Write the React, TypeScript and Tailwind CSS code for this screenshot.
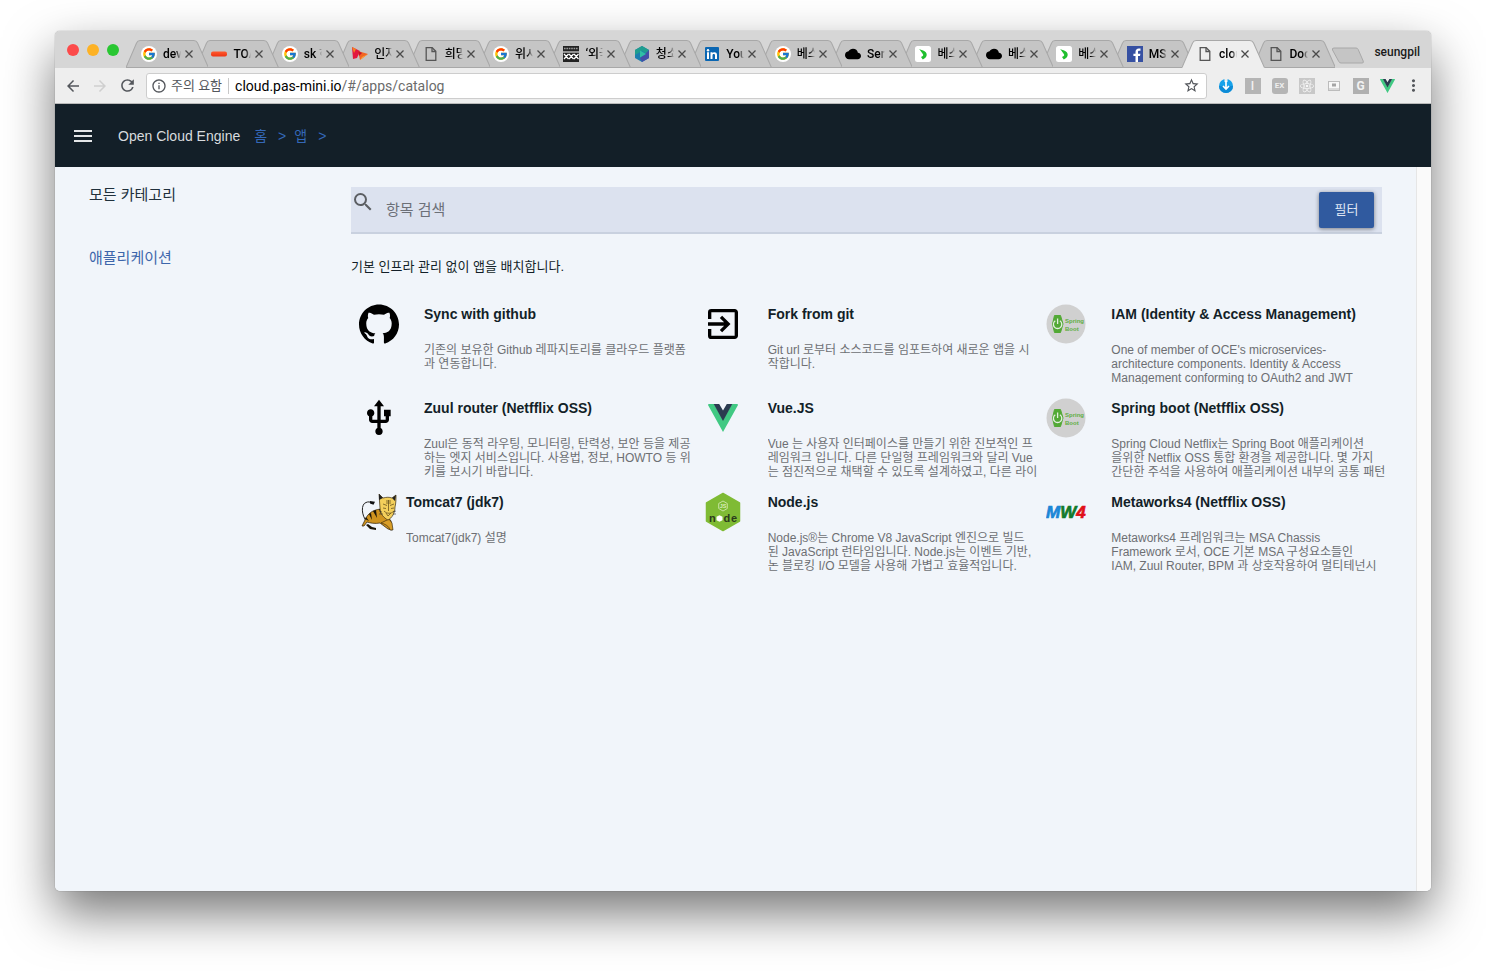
import React from "react";
import {
  MdArrowBack,
  MdArrowForward,
  MdCloud,
  MdExitToApp,
  MdInfoOutline,
  MdMenu,
  MdMoreVert,
  MdRefresh,
  MdSearch,
  MdStarBorder,
  MdUsb,
} from "react-icons/md";
import { FcGoogle } from "react-icons/fc";
import { SiGithub, SiReact } from "react-icons/si";

/* ---------- favicons ---------- */

const GoogleIcon = () => (
  <span className="flex size-4 items-center justify-center rounded-full bg-white">
    <FcGoogle className="size-[14px]" />
  </span>
);

const ToastIcon = () => (
  <svg viewBox="0 0 16 16" className="size-4">
    <defs>
      <linearGradient id="toast" x1="0" y1="0" x2="0" y2="1">
        <stop offset="0" stopColor="#ff5a2e" />
        <stop offset="1" stopColor="#ee3413" />
      </linearGradient>
    </defs>
    <rect x="0" y="5.500" width="16" height="5" rx="2" fill="url(#toast)" />
  </svg>
);

const WingsIcon = () => (
  <svg viewBox="0 0 16 16" className="size-4">
    <path d="M0 1 L8 5 L5 12 L1 13 Z" fill="#e3173e" />
    <path d="M0 1 L4 3 L2 7 Z" fill="#f58220" />
    <path d="M6 5 L16 8 L8 14 Z" fill="#f26522" />
    <path d="M6 5 L10 7 L7 10 Z" fill="#c8102e" />
    <path d="M10 11 L16 8 L8 14 Z" fill="#f9a13a" />
  </svg>
);

const PageIcon = () => (
  <svg viewBox="0 0 16 16" className="size-4" fill="none" stroke="#555" strokeWidth="1.3">
    <path d="M3.2 1.7h6l3.6 3.6v9H3.2z" />
    <path d="M9 1.7v3.8h3.8" />
  </svg>
);

const CrowdIcon = () => (
  <svg viewBox="0 0 16 16" className="size-4">
    <rect width="16" height="16" fill="#222" />
    <path d="M1 2.500h14" stroke="#999" strokeWidth="1.500" strokeDasharray="1.600 .8" />
    <path
      d="M0 6h16M1 8l4.500 5m0-5L1 13M6 8l4.500 5m0-5L6 13M11 8l4.500 5m0-5L11 13"
      stroke="#fff"
      strokeWidth="1.200"
    />
  </svg>
);

const HexPlayIcon = () => (
  <svg viewBox="0 0 16 16" className="size-4">
    <path d="M8 0l7 4v8l-7 4-7-4V4z" fill="#1b7fae" />
    <path d="M8 0l7 4-2 4-5-3-7 4V4z" fill="#1f9d8f" />
    <path d="M8 16l7-4V4l-4 4-5 4z" fill="#4350a8" />
    <path d="M6 4.500l6 3.500-6 3.500z" fill="#2fc0a4" />
  </svg>
);

const LinkedInIcon = () => (
  <svg viewBox="0 0 16 16" className="size-4">
    <rect x="1" y="1" width="14" height="14" rx="1" fill="#0a66b2" />
    <path
      d="M3 6.300h2V13H3zM6.500 6.300h2v.9c.9-1.500 4.500-1.500 4.500 1.600V13h-2V9.400c0-1.900-2.500-1.700-2.500 0V13h-2z"
      fill="#fff"
    />
    <circle cx="4" cy="4.200" r="1.200" fill="#fff" />
  </svg>
);

const CloudIcon = () => <MdCloud className="size-4 text-black" />;

const GreenHookIcon = () => (
  <svg viewBox="0 0 16 16" className="size-4">
    <rect width="16" height="16" rx="2.500" fill="#fff" />
    <path
      d="M4.200 3c2 1.200 4.700 1.300 6.600 3.300 2 2.500.6 5.700-3 7.200l-1.800-2.500c2.300-.9 2.800-1.800 1.600-3.300L4.200 3z"
      fill="#1fbf2e"
    />
  </svg>
);

const FacebookIcon = () => (
  <svg viewBox="0 0 16 16" className="size-4">
    <rect width="16" height="16" fill="#3650a2" />
    <path
      d="M8.500 16V10H6.400V7.700h2.100V6c0-2.200 1.300-3.400 3.300-3.400h1.700v2.200h-1.200c-1 0-1.300.5-1.300 1.300v1.600h2.400l-.4 2.300h-2V16z"
      fill="#fff"
    />
  </svg>
);

const VueLogo = ({ className }: { className: string }) => (
  <svg viewBox="0 0 30 28" className={className}>
    <path d="M0 1Q0 0 1 0h5l9 15.500L24 0h5q1 0 1 1L15 28z" fill="#41c983" />
    <path d="M5.700 0h5.500L15 6.600 18.800 0h5.500L15 17z" fill="#2b3b50" />
  </svg>
);

/* ---------- browser chrome ---------- */

type Tab = { title: string; icon: () => React.ReactElement; active?: boolean };

const tabs: Tab[] = [
  { title: "dev", icon: GoogleIcon },
  { title: "TOA", icon: ToastIcon },
  { title: "sk 하", icon: GoogleIcon },
  { title: "인자", icon: WingsIcon },
  { title: "희망", icon: PageIcon },
  { title: "위시", icon: GoogleIcon },
  { title: "‘외국", icon: CrowdIcon },
  { title: "청소", icon: HexPlayIcon },
  { title: "You", icon: LinkedInIcon },
  { title: "베스", icon: GoogleIcon },
  { title: "Ser", icon: CloudIcon },
  { title: "베스", icon: GreenHookIcon },
  { title: "베스", icon: CloudIcon },
  { title: "베스", icon: GreenHookIcon },
  { title: "MS", icon: FacebookIcon },
  { title: "clou", icon: PageIcon, active: true },
  { title: "Doc", icon: PageIcon },
];

function BrowserTab({ tab, order }: { tab: Tab; order: number }) {
  const Icon = tab.icon;
  return (
    <div
      role="tab"
      aria-selected={!!tab.active}
      className="relative flex h-7 min-w-0 flex-1 items-center pl-[9px]"
      style={{ zIndex: order }}
    >
      <svg
        viewBox="0 0 82 28"
        preserveAspectRatio="none"
        className="absolute inset-y-0 -left-1.5 -z-10 h-7 w-[calc(100%+12px)]"
      >
        <path
          d="M0 27.500L10.500 3Q11.500.5 14 .5H67.500Q70 .5 71.200 3L82 27.500V28H0z"
          fill={tab.active ? "#eeeeee" : "#c5c5c5"}
        />
        <path
          d={`M0 27.500L10.500 3Q11.500.5 14 .5H67.500Q70 .5 71.200 3L82 27.500${tab.active ? "" : "H0"}`}
          fill="none"
          stroke="#a8a8a8"
        />
      </svg>
      <Icon />
      <span className="ml-1.5 w-[18px] overflow-hidden text-xs font-medium whitespace-nowrap text-black [mask-image:linear-gradient(to_right,black_70%,transparent)]">
        {tab.title}
      </span>
      <button type="button" aria-label="닫기" className="ml-0.5 flex size-3 shrink-0 items-center justify-center">
        <svg viewBox="0 0 8 8" className="size-2" stroke="#4a4a4a" strokeWidth="1.300">
          <path d="M.5.5l7 7M7.500.5l-7 7" />
        </svg>
      </button>
    </div>
  );
}

function TabStrip() {
  return (
    <div className="flex h-[37px] items-end bg-[#d6d6d6]">
      <div className="flex w-[77px] shrink-0 items-center gap-2 self-center pl-3">
        <span className="size-3 rounded-full bg-[#fc4a4a]" />
        <span className="size-3 rounded-full bg-[#fdb225]" />
        <span className="size-3 rounded-full bg-[#29c732]" />
      </div>
      <div role="tablist" className="isolate flex min-w-0 flex-1">
        {tabs.map((tab, i) => (
          <BrowserTab key={i} tab={tab} order={tab.active ? 40 : 30 - i} />
        ))}
      </div>
      <button type="button" aria-label="새 탭" className="mb-1 ml-0.5 shrink-0">
        <svg viewBox="0 0 34 17" className="h-[17px] w-[34px]">
          <path
            d="M3 1h22q1.500 0 2.200 1.500l5 11.500q.7 2-1 2H10q-1.500 0-2.200-1.500L1.500 3Q.8 1 3 1z"
            fill="#c5c5c5"
            stroke="#a8a8a8"
          />
        </svg>
      </button>
      <span className="w-[66px] shrink-0 self-center pt-1 pr-[11px] text-right text-xs font-medium text-[#1a1a1a]">
        seungpil
      </span>
    </div>
  );
}

const extensionButton = "flex h-4 w-[27px] items-center justify-center";

function Toolbar() {
  return (
    <div className="flex h-9 items-center border-b border-[#b9b9b9] bg-[#eeeeee] pr-1.5 pl-2">
      <button type="button" aria-label="뒤로" className="flex w-[19px] justify-center">
        <MdArrowBack className="size-[18px] text-[#54575c]" />
      </button>
      <button type="button" aria-label="앞으로" className="ml-2 flex w-[19px] justify-center">
        <MdArrowForward className="size-[18px] text-[#cfcfcf]" />
      </button>
      <button type="button" aria-label="새로고침" className="ml-2 flex w-5 justify-center">
        <MdRefresh className="size-[19px] text-[#54575c]" />
      </button>
      <div className="ml-[9px] flex h-[26px] min-w-0 flex-1 items-center rounded-[3px] border border-[#cdcdcd] bg-white pr-1.5 pl-1">
        <MdInfoOutline className="size-4 text-[#54575c]" />
        <span className="ml-1 text-[13px] text-[#54575c]">주의 요함</span>
        <span className="ml-1.5 h-4 w-px bg-[#c8c8c8]" />
        <span className="ml-1.5 flex-1 text-sm text-[#6b6b6b]">
          <span className="text-black">cloud.pas-mini.io</span>/#/apps/catalog
        </span>
        <button type="button" aria-label="북마크">
          <MdStarBorder className="size-[17px] text-[#54575c]" />
        </button>
      </div>
      <div className="ml-[5px] flex shrink-0 items-center">
        <button type="button" aria-label="다운로드" className={extensionButton}>
          <svg viewBox="0 0 14 14" className="size-3.5">
            <circle cx="7" cy="7" r="7" fill="#17a2ea" />
            <path d="M7 14A7 7 0 0 0 14 7H0a7 7 0 0 0 7 7z" fill="#0d8bd6" />
            <path d="M5.500 0h3v3h-3z" fill="#eeeeee" />
            <path d="M7 2v7M4 7l3 3 3-3" fill="none" stroke="#fff" strokeWidth="1.700" />
          </svg>
        </button>
        <button type="button" className={extensionButton}>
          <span className="flex size-4 items-center justify-center bg-[#b5b5b5] text-xs font-medium text-[#f2f2f2]">
            I
          </span>
        </button>
        <button type="button" className={extensionButton}>
          <span className="flex size-4 items-center justify-center rounded-[3px] bg-[#b5b5b5] text-[8px] font-bold text-[#eeeeee]">
            EX
          </span>
        </button>
        <button type="button" aria-label="React" className={extensionButton}>
          <span className="flex size-4 items-center justify-center bg-[#c8c8c8]">
            <SiReact className="size-3.5 text-[#f7f7f7]" />
          </span>
        </button>
        <button type="button" aria-label="카드" className={extensionButton}>
          <svg viewBox="0 0 12 10" className="h-2.5 w-3">
            <rect x=".5" y=".5" width="11" height="9" fill="#f7f7f7" stroke="#bcbcbc" />
            <rect x="4" y="2.500" width="4" height="3" fill="#a5a5a5" />
            <path d="M1 8h10" stroke="#bcbcbc" />
          </svg>
        </button>
        <button type="button" className={extensionButton}>
          <span className="flex size-4 items-center justify-center bg-[#b0b0b0] text-xs font-bold text-[#f2f2f2]">
            G
          </span>
        </button>
        <button type="button" aria-label="Vue" className={extensionButton}>
          <VueLogo className="h-3.5 w-[15px]" />
        </button>
        <button type="button" aria-label="메뉴" className="flex w-6 justify-center">
          <MdMoreVert className="size-[19px] text-[#54575c]" />
        </button>
      </div>
    </div>
  );
}

/* ---------- application ---------- */

function AppHeader() {
  return (
    <header className="flex h-[63px] items-center bg-[#131f28] pl-4">
      <button type="button" aria-label="메뉴 열기">
        <MdMenu className="size-6 text-[#e4e6e8]" />
      </button>
      <span className="ml-[23px] text-sm text-[#d8dbde]">Open Cloud Engine</span>
      <nav className="ml-3.5 flex items-center text-sm text-[#3468b8]">
        <a href="#/home">홈</a>
        <span className="ml-[11px]">&gt;</span>
        <a href="#/apps" className="ml-2">
          앱
        </a>
        <span className="ml-[11px]">&gt;</span>
      </nav>
    </header>
  );
}

const SpringBootIcon = () => (
  <svg
    viewBox="0 0 40 40"
    className="size-10"
    fontFamily="'Liberation Sans Narrow', 'Liberation Sans', sans-serif"
    fontWeight="bold"
  >
    <circle cx="20" cy="20" r="19.500" fill="#d0d0d0" />
    <path d="M8.500 11.500h6l2.500 8.500-2.500 8.500h-6L6.500 20z" fill="#52a935" strokeLinejoin="round" stroke="#52a935" />
    <path d="M9.300 16.800a4.200 4.200 0 1 0 4.600 0M11.600 14.500v5.500" fill="none" stroke="#e4efe0" strokeWidth="1.300" />
    <text x="19" y="19" fontSize="6" fill="#5fae43">
      Spring
    </text>
    <text x="19" y="27" fontSize="6" fill="#5fae43">
      Boot
    </text>
  </svg>
);

const TomcatIcon = () => (
  <svg viewBox="0 0 36 38" className="h-[38px] w-9">
    <path d="M6 29C0 22 0 11 5 9.500c2-1 4-.7 6 .5" fill="none" stroke="#222" strokeWidth="1" />
    <path d="M9 8l5 .8-1.500 3-3.500-1.200z" fill="#111" />
    <path
      d="M1 33l4-8c3-6 9-9 17-9l5 8 3 4 1 9-4-1-8-6c-5 1-10 0-13-1l-3 4z"
      fill="#cf931e"
      stroke="#2a1d08"
      strokeWidth=".7"
    />
    <path
      d="M7 31l4 3 4 1v2l-6-1-4-4zM12 18l4 7-1-8zM8 21l3 6-1-7zM18 16l2 5 1-5zM4 26l4 2-3-4z"
      fill="#1b1508"
    />
    <path d="M20 30c4 1 8 3 9 7h3l-1-7-3-4z" fill="#d99e28" stroke="#2a1d08" strokeWidth=".6" />
    <path
      d="M18 1l4 4c4-1 6-1 9 0l4-3c0 4 0 8-1 12 0 6-3 11-7 13-4-2-8-6-8-12z"
      fill="#f3cf5b"
      stroke="#3b2c10"
      strokeWidth=".7"
    />
    <path d="M18 1v6l4-2zM35 2l-4 3 3 3z" fill="#222" />
    <path
      d="M22 11l4 1.500M33 11l-4 1.500M22 15l3 .5M33 15l-3 .5M27.500 7v11M23 18c3 3 7 3 10 0M25 20l2 3 3-3M25 8h5M25 10h5"
      fill="none"
      stroke="#6b5620"
      strokeWidth=".8"
    />
    <path d="M18 18l3 1M18 21h4M35 18l-3 1M35 21h-3" stroke="#333" strokeWidth=".6" />
  </svg>
);

const NodeIcon = () => (
  <svg viewBox="0 0 36 40" className="h-10 w-9" fontFamily="Liberation Sans, sans-serif" fontWeight="bold">
    <path
      d="M18 1.500L34.500 11v18L18 38.500 1.500 29V11z"
      fill="#7fbb34"
      stroke="#7fbb34"
      strokeWidth="1.500"
      strokeLinejoin="round"
    />
    <path d="M18 9l4.300 2.500v5L18 19l-4.300-2.500v-5z" fill="none" stroke="#cfe6ad" strokeWidth=".9" />
    <text x="18" y="16" fontSize="5.500" fill="#d9ecbe" textAnchor="middle">
      JS
    </text>
    <path d="M14.500 23.200l3 1.500v3.600l-3 1.500-3-1.500v-3.600z" fill="#fff" />
    <g fill="#2c3b1c" fontSize="11">
      <text x="4" y="30">
        n
      </text>
      <text x="18.500" y="30">
        d
      </text>
      <text x="26" y="30">
        e
      </text>
    </g>
  </svg>
);

const MetaworksIcon = () => (
  <svg
    viewBox="0 0 40 20"
    className="h-5 w-10"
    fontFamily="Liberation Sans, sans-serif"
    fontWeight="bold"
    fontStyle="italic"
  >
    <text x="0" y="16" fontSize="17" strokeWidth=".7">
      <tspan fill="#1c86d6" stroke="#1c86d6">
        M
      </tspan>
      <tspan fill="#137a2b" stroke="#137a2b">
        W
      </tspan>
      <tspan fill="#e01018" stroke="#e01018">
        4
      </tspan>
    </text>
  </svg>
);

type CatalogItem = {
  title: string;
  lines: string[];
  icon: React.ReactElement;
  compact?: boolean;
};

const catalog: CatalogItem[] = [
  {
    title: "Sync with github",
    lines: ["기존의 보유한 Github 레파지토리를 클라우드 플랫폼", "과 연동합니다."],
    icon: <SiGithub className="size-10 text-black" />,
  },
  {
    title: "Fork from git",
    lines: ["Git url 로부터 소스코드를 임포트하여 새로운 앱을 시", "작합니다."],
    icon: <MdExitToApp className="size-10 text-black" />,
  },
  {
    title: "IAM (Identity & Access Management)",
    lines: [
      "One of member of OCE's microservices-",
      "architecture components. Identity & Access",
      "Management conforming to OAuth2 and JWT",
    ],
    icon: <SpringBootIcon />,
  },
  {
    title: "Zuul router (Netfflix OSS)",
    lines: [
      "Zuul은 동적 라우팅, 모니터링, 탄력성, 보안 등을 제공",
      "하는 엣지 서비스입니다. 사용법, 정보, HOWTO 등 위",
      "키를 보시기 바랍니다.",
    ],
    icon: <MdUsb className="size-10 text-black" />,
  },
  {
    title: "Vue.JS",
    lines: [
      "Vue 는 사용자 인터페이스를 만들기 위한 진보적인 프",
      "레임워크 입니다. 다른 단일형 프레임워크와 달리 Vue",
      "는 점진적으로 채택할 수 있도록 설계하였고, 다른 라이",
    ],
    icon: <VueLogo className="h-7 w-[30px]" />,
  },
  {
    title: "Spring boot (Netfflix OSS)",
    lines: [
      "Spring Cloud Netflix는 Spring Boot 애플리케이션",
      "을위한 Netflix OSS 통합 환경을 제공합니다. 몇 가지",
      "간단한 주석을 사용하여 애플리케이션 내부의 공통 패턴",
    ],
    icon: <SpringBootIcon />,
  },
  {
    title: "Tomcat7 (jdk7)",
    lines: ["Tomcat7(jdk7) 설명"],
    icon: <TomcatIcon />,
    compact: true,
  },
  {
    title: "Node.js",
    lines: [
      "Node.js®는 Chrome V8 JavaScript 엔진으로 빌드",
      "된 JavaScript 런타임입니다. Node.js는 이벤트 기반,",
      "논 블로킹 I/O 모델을 사용해 가볍고 효율적입니다.",
    ],
    icon: <NodeIcon />,
  },
  {
    title: "Metaworks4 (Netfflix OSS)",
    lines: [
      "Metaworks4 프레임워크는 MSA Chassis",
      "Framework 로서, OCE 기본 MSA 구성요소들인",
      "IAM, Zuul Router, BPM 과 상호작용하여 멀티테넌시",
    ],
    icon: <MetaworksIcon />,
  },
];

function CatalogCard({ item }: { item: CatalogItem }) {
  return (
    <article className={`flex min-w-0 pt-2.5 pb-1 pl-2 ${item.compact ? "gap-[7px]" : "gap-[25px]"}`}>
      <div className="flex size-10 shrink-0 items-center justify-center">{item.icon}</div>
      <div className="shrink-0">
        <h3 className="text-sm leading-5 font-bold whitespace-nowrap text-[#131f28]">{item.title}</h3>
        <p className="mt-[19px] h-[41px] overflow-hidden text-xs leading-[14px] whitespace-pre text-[#6d6f73]">
          {item.lines.join("\n")}
        </p>
      </div>
    </article>
  );
}

function Catalog() {
  return (
    <main className="min-w-0 flex-1 pt-5 pr-[34px]">
      <div className="flex h-[47px] items-center border-b-2 border-[#c9d1df] bg-[#dce2ef] pr-2">
        <MdSearch className="mt-[3px] size-6 self-start text-[#5c5f63]" />
        <input
          type="text"
          aria-label="항목 검색"
          placeholder="항목 검색"
          className="ml-[11px] min-w-0 flex-1 bg-transparent pt-0.5 text-[15px] outline-none placeholder:text-[#6c7078]"
        />
        <button
          type="button"
          className="h-9 w-[55px] rounded-[2px] bg-[#305a9f] text-[13px] text-[#dfe6f3] shadow-[0_1px_4px_rgba(0,0,0,0.45)]"
        >
          필터
        </button>
      </div>
      <p className="mt-[23px] text-[13px] leading-5 text-[#131f28]">기본 인프라 관리 없이 앱을 배치합니다.</p>
      <div className="mt-[17px] grid grid-cols-3">
        {catalog.map((item) => (
          <CatalogCard key={item.title} item={item} />
        ))}
      </div>
    </main>
  );
}

export default function App() {
  return (
    <div className="flex min-h-screen flex-col bg-white px-[55px] pt-[31px] pb-20">
      <div className="flex flex-1 flex-col rounded-[5px] shadow-[0_22px_50px_rgba(0,0,0,0.54),0_0_1px_rgba(0,0,0,0.6)]">
        <div className="flex flex-1 flex-col overflow-hidden rounded-[5px]">
          <div className="font-[Roboto,'Noto_Sans_CJK_KR',sans-serif]">
            <TabStrip />
            <Toolbar />
          </div>
          <div className="flex flex-1 flex-col bg-[#f1f5fa] font-['Liberation_Sans','Noto_Sans_CJK_KR',sans-serif]">
            <AppHeader />
            <div className="flex flex-1">
              <aside className="w-[296px] shrink-0 pt-[17px] pl-[34px] text-[15px] leading-[22px]">
                <h2 className="text-[#20303c]">모든 카테고리</h2>
                <a href="#/apps/catalog" className="mt-[41px] block text-[#3d66ab]">
                  애플리케이션
                </a>
              </aside>
              <Catalog />
              <div className="w-[15px] shrink-0 border-l border-[#e6e6e6] bg-[#fafafa]" />
            </div>
          </div>
        </div>
      </div>
    </div>
  );
}
